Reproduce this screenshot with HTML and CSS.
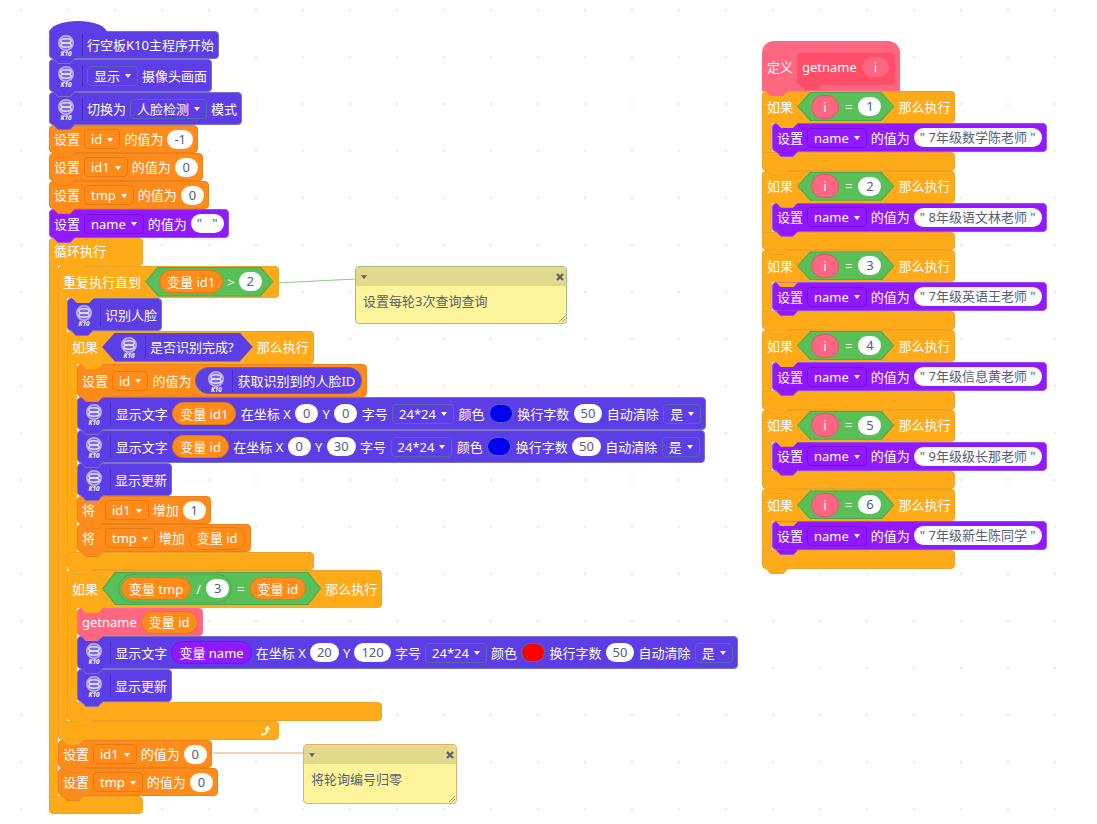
FILE: index.html
```html
<!DOCTYPE html>
<html lang="zh">
<head>
<meta charset="utf-8">
<title>行空板K10 积木程序</title>
<link rel="stylesheet" href="styles.css">
</head>
<body>
<svg class="defs" width="0" height="0" aria-hidden="true">
  <symbol id="k10" viewBox="0 0 24 24">
    <circle cx="12" cy="10" r="7.2" fill="#7c66ea" stroke="#bdb4f6" stroke-width="1.6"/>
    <ellipse cx="12" cy="7.9" rx="5.2" ry="2.2" fill="none" stroke="#e3dffc" stroke-width="1.5"/>
    <ellipse cx="12" cy="12.1" rx="5.2" ry="2.2" fill="none" stroke="#e3dffc" stroke-width="1.5"/>
  </symbol>
  <symbol id="dn" viewBox="0 0 8 5"><path d="M0 0h8L4 5z" fill="#575e75"/></symbol>
  <symbol id="cl" viewBox="0 0 8 8"><path d="M1 1l6 6M7 1L1 7" stroke="#575e75" stroke-width="2.2" fill="none"/></symbol>
  <symbol id="rs" viewBox="0 0 8 8"><path d="M1 7L7 1M4 7l3-3" stroke="#9a9a7c" stroke-width="1" fill="none"/></symbol>
</svg>

<main class="canvas">
  <svg class="links" width="1097" height="824" aria-hidden="true">
    <line x1="277" y1="283" x2="356" y2="279" class="link-green"/>
    <line x1="213" y1="753" x2="304" y2="753" class="link-orange"/>
  </svg>

  <section class="script script-main">
    <div class="b violet hat"><span class="ic"><svg><use href="#k10"/></svg><b class="k">K10</b></span><i class="sep"></i><span>行空板K10主程序开始</span></div>
    <div class="b violet h33"><span class="ic"><svg><use href="#k10"/></svg><b class="k">K10</b></span><i class="sep"></i><span class="dd">显示</span><span>摄像头画面</span></div>
    <div class="b violet h33"><span class="ic"><svg><use href="#k10"/></svg><b class="k">K10</b></span><i class="sep"></i><span>切换为</span><span class="dd">人脸检测</span><span>模式</span></div>
    <div class="b orange"><span>设置</span><span class="dd">id</span><span>的值为</span><span class="num">-1</span></div>
    <div class="b orange"><span>设置</span><span class="dd">id1</span><span>的值为</span><span class="num">0</span></div>
    <div class="b orange"><span>设置</span><span class="dd">tmp</span><span>的值为</span><span class="num">0</span></div>
    <div class="b purple h29"><span>设置</span><span class="dd">name</span><span>的值为</span><span class="num str">"&nbsp;&nbsp;&nbsp;"</span></div>

    <div class="c amber forever">
      <div class="c-head"><span>循环执行</span></div>
      <div class="c-mouth arm9">

        <div class="c amber">
          <div class="c-head h32"><span>重复执行直到</span>
            <div class="bool green"><span class="pill orange">变量 id1</span><span>&gt;</span><span class="num">2</span></div>
          </div>
          <div class="c-mouth arm9">
            <div class="b violet h33"><span class="ic"><svg><use href="#k10"/></svg><b class="k">K10</b></span><i class="sep"></i><span>识别人脸</span></div>

            <div class="c amber">
              <div class="c-head h33"><span>如果</span>
                <div class="bool violet bool-ic"><span class="ic"><svg><use href="#k10"/></svg><b class="k">K10</b></span><i class="sep"></i><span>是否识别完成?</span></div>
                <span>那么执行</span>
              </div>
              <div class="c-mouth">
                <div class="b orange h33"><span>设置</span><span class="dd">id</span><span>的值为</span>
                  <div class="pill violet pill-ic"><span class="ic"><svg><use href="#k10"/></svg><b class="k">K10</b></span><i class="sep"></i><span>获取识别到的人脸ID</span></div>
                </div>
                <div class="b violet h33 row-wide"><span class="ic"><svg><use href="#k10"/></svg><b class="k">K10</b></span><i class="sep"></i><span>显示文字</span><span class="pill orange">变量 id1</span><span>在坐标 X</span><span class="num">0</span><span>Y</span><span class="num">0</span><span>字号</span><span class="dd">24*24</span><span>颜色</span><i class="swatch blue"></i><span>换行字数</span><span class="num">50</span><span>自动清除</span><span class="dd">是</span></div>
                <div class="b violet h33 row-wide"><span class="ic"><svg><use href="#k10"/></svg><b class="k">K10</b></span><i class="sep"></i><span>显示文字</span><span class="pill orange">变量 id</span><span>在坐标 X</span><span class="num">0</span><span>Y</span><span class="num">30</span><span>字号</span><span class="dd">24*24</span><span>颜色</span><i class="swatch blue"></i><span>换行字数</span><span class="num">50</span><span>自动清除</span><span class="dd">是</span></div>
                <div class="b violet h33"><span class="ic"><svg><use href="#k10"/></svg><b class="k">K10</b></span><i class="sep"></i><span>显示更新</span></div>
                <div class="b orange"><span class="w-jiang">将</span><span class="dd">id1</span><span>增加</span><span class="num">1</span></div>
                <div class="b orange"><span class="w-jiang">将</span><span class="dd">tmp</span><span>增加</span><span class="pill orange">变量 id</span></div>
              </div>
              <div class="c-foot"></div>
            </div>

            <div class="c amber">
              <div class="c-head h38"><span>如果</span>
                <div class="bool green bool-wide">
                  <div class="pill green pill-math"><span class="pill orange">变量 tmp</span><span>/</span><span class="num">3</span></div>
                  <span>=</span><span class="pill orange">变量 id</span>
                </div>
                <span>那么执行</span>
              </div>
              <div class="c-mouth">
                <div class="b pink"><span>getname</span><span class="pill orange">变量 id</span></div>
                <div class="b violet h33 row-mid"><span class="ic"><svg><use href="#k10"/></svg><b class="k">K10</b></span><i class="sep"></i><span>显示文字</span><span class="pill purple">变量 name</span><span>在坐标 X</span><span class="num">20</span><span>Y</span><span class="num">120</span><span>字号</span><span class="dd">24*24</span><span>颜色</span><i class="swatch red"></i><span>换行字数</span><span class="num">50</span><span>自动清除</span><span class="dd">是</span></div>
                <div class="b violet h33"><span class="ic"><svg><use href="#k10"/></svg><b class="k">K10</b></span><i class="sep"></i><span>显示更新</span></div>
              </div>
              <div class="c-foot h19"></div>
            </div>
          </div>
          <div class="c-foot h19 loop-foot">
            <svg class="loop" width="11" height="11" viewBox="0 0 11 11"><path d="M1 9.5C5 10 7.5 8 7.5 3.5" fill="none" stroke="#fff" stroke-width="2"/><path d="M4.5 4.5L7.5 0.5l3 4z" fill="#fff"/></svg>
          </div>
        </div>

        <div class="b orange"><span>设置</span><span class="dd">id1</span><span>的值为</span><span class="num">0</span></div>
        <div class="b orange"><span>设置</span><span class="dd">tmp</span><span>的值为</span><span class="num">0</span></div>
      </div>
      <div class="c-foot no-tab"></div>
    </div>
  </section>

  <section class="script script-def">
    <div class="define pink">
      <span>定义</span>
      <div class="proto"><span>getname</span><span class="pill arg">i</span></div>
    </div>

    <div class="c amber case">
      <div class="c-head h32"><span>如果</span><div class="bool green bool-case"><span class="pill arg-round">i</span><span>=</span><span class="num">1</span></div><span>那么执行</span></div>
      <div class="c-mouth"><div class="b purple h29"><span>设置</span><span class="dd">name</span><span>的值为</span><span class="num str">"&nbsp;7年级数学陈老师&nbsp;"</span></div></div>
      <div class="c-foot case-foot"></div>
    </div>
    <div class="c amber case">
      <div class="c-head h32"><span>如果</span><div class="bool green bool-case"><span class="pill arg-round">i</span><span>=</span><span class="num">2</span></div><span>那么执行</span></div>
      <div class="c-mouth"><div class="b purple h29"><span>设置</span><span class="dd">name</span><span>的值为</span><span class="num str">"&nbsp;8年级语文林老师&nbsp;"</span></div></div>
      <div class="c-foot case-foot"></div>
    </div>
    <div class="c amber case">
      <div class="c-head h32"><span>如果</span><div class="bool green bool-case"><span class="pill arg-round">i</span><span>=</span><span class="num">3</span></div><span>那么执行</span></div>
      <div class="c-mouth"><div class="b purple h29"><span>设置</span><span class="dd">name</span><span>的值为</span><span class="num str">"&nbsp;7年级英语王老师&nbsp;"</span></div></div>
      <div class="c-foot case-foot"></div>
    </div>
    <div class="c amber case">
      <div class="c-head h32"><span>如果</span><div class="bool green bool-case"><span class="pill arg-round">i</span><span>=</span><span class="num">4</span></div><span>那么执行</span></div>
      <div class="c-mouth"><div class="b purple h29"><span>设置</span><span class="dd">name</span><span>的值为</span><span class="num str">"&nbsp;7年级信息黄老师&nbsp;"</span></div></div>
      <div class="c-foot case-foot"></div>
    </div>
    <div class="c amber case">
      <div class="c-head h32"><span>如果</span><div class="bool green bool-case"><span class="pill arg-round">i</span><span>=</span><span class="num">5</span></div><span>那么执行</span></div>
      <div class="c-mouth"><div class="b purple h29"><span>设置</span><span class="dd">name</span><span>的值为</span><span class="num str">"&nbsp;9年级级长那老师&nbsp;"</span></div></div>
      <div class="c-foot case-foot"></div>
    </div>
    <div class="c amber case">
      <div class="c-head h32"><span>如果</span><div class="bool green bool-case"><span class="pill arg-round">i</span><span>=</span><span class="num">6</span></div><span>那么执行</span></div>
      <div class="c-mouth"><div class="b purple h29"><span>设置</span><span class="dd">name</span><span>的值为</span><span class="num str">"&nbsp;7年级新生陈同学&nbsp;"</span></div></div>
      <div class="c-foot case-foot"></div>
    </div>
  </section>

  <aside class="note note-a">
    <div class="note-head"><svg class="n-dn"><use href="#dn"/></svg><svg class="n-cl"><use href="#cl"/></svg></div>
    <div class="note-body">设置每轮3次查询查询</div>
    <svg class="n-rs"><use href="#rs"/></svg>
  </aside>
  <aside class="note note-b">
    <div class="note-head"><svg class="n-dn"><use href="#dn"/></svg><svg class="n-cl"><use href="#cl"/></svg></div>
    <div class="note-body">将轮询编号归零</div>
    <svg class="n-rs"><use href="#rs"/></svg>
  </aside>
</main>
</body>
</html>
```
FILE: styles.css
```css
* { box-sizing: border-box; }
html, body { margin: 0; padding: 0; background: #fff; }
body {
  font-family: "Noto Sans", "Noto Sans CJK SC", sans-serif;
  font-size: 13px;
  line-height: 18px;
  color: #fff;
}
.defs { position: absolute; }

.canvas {
  position: relative;
  width: 1097px;
  height: 824px;
  overflow: hidden;
  background-color: #fff;
  background-image: radial-gradient(circle at center, #e8e8e8 0, #e8e8e8 1px, transparent 1.3px);
  background-size: 47px 47px;
  background-position: -2.5px -13.5px;
}
.links { position: absolute; left: 0; top: 0; }
.link-green { stroke: #8fc58a; stroke-width: 1; }
.link-orange { stroke: #e5a566; stroke-width: 1; }

.script {
  position: absolute;
  display: flex;
  flex-direction: column;
  align-items: flex-start;
}
.script-main { left: 49px; top: 31px; }
.script-def { left: 762px; top: 41px; }

/* palette */
.violet { --f: #5c3de6; --e: #7774bd; --d: #5568ac; }
.orange { --f: #ff8c1a; --e: #ea8120; --d: #e67a10; }
.amber  { --f: #ffab19; --e: #eaa32a; --d: #e09510; }
.purple { --f: #9119ff; --e: #9a50e0; --d: #7a10dd; }
.pink   { --f: #ff6680; --e: #f5708a; --d: #e04a66; }
.green  { --f: #59c059; --e: #4fa84f; --d: #4fa84f; }

/* stack blocks */
.b, .c-head, .c-foot {
  position: relative;
  display: flex;
  align-items: center;
  gap: 4px;
  height: 28px;
  padding: 0 4px;
  white-space: nowrap;
  background: var(--f);
  border: 1px solid var(--e);
  border-radius: 4px;
}
.b { width: max-content; }
.h29 { height: 29px; }
.h32 { height: 32px; }
.h33 { height: 33px; }
.h38 { height: 38px; }
.row-wide { gap: 4.4px; }
.row-mid { gap: 4.15px; }
.w-jiang { width: 19px; }

.b::after, .c-foot::after, .c-head::after, .define::after, .proto::after {
  content: "";
  position: absolute;
  z-index: 2;
  top: 100%;
  left: 3px;
  width: 22px;
  height: 5px;
  background: var(--f);
  clip-path: polygon(0 0, 100% 0, calc(100% - 5px) 100%, 5px 100%);
}
.b::before, .c-foot::before {
  content: "";
  position: absolute;
  z-index: 2;
  top: calc(100% + 1px);
  left: 3px;
  width: 22px;
  height: 5px;
  background: var(--e);
  clip-path: polygon(0 0, 100% 0, calc(100% - 5px) 100%, 5px 100%);
}
.no-tab::before, .no-tab::after { display: none; }
.hat { border-top-left-radius: 0; }
.hat > .ic, .hat > span, .hat > .sep { position: relative; z-index: 1; }
.hat .ic::before {
  content: "";
  position: absolute;
  left: -5px;
  top: -12px;
  width: 58px;
  height: 12px;
  background: var(--f);
  border-radius: 50% 50% 0 0 / 100% 100% 0 0;
}

/* C-shaped blocks */
.c {
  display: inline-flex;
  flex-direction: column;
  position: relative;
}
.forever { min-width: 94px; }
.forever > .c-head { padding-bottom: 4px; }
.c-head {
  padding-bottom: 2px;
  border-bottom: 0;
  border-bottom-left-radius: 0;
  border-bottom-right-radius: 4px;
}
.c-head::after { left: 13px; }
.c-mouth {
  display: flex;
  flex-direction: column;
  align-items: flex-start;
  width: 0;
  padding-left: 9px;
  background: var(--f);
  border-left: 1px solid var(--e);
  box-sizing: content-box;
}
.arm9 { padding-left: 8px; }
.c-foot { height: 18px; border-top-left-radius: 0; }
.h19 { height: 19px; }
.case-foot { height: 18.7px; }
.loop-foot { justify-content: flex-end; }
.loop { margin-right: 3px; margin-bottom: 1px; }

/* fields */
.ic {
  position: relative;
  flex: none;
  width: 24px;
  height: 24px;
  display: flex;
  justify-content: center;
}
.ic svg { width: 24px; height: 24px; }
.k {
  position: absolute;
  left: 0;
  right: 0;
  bottom: 0;
  text-align: center;
  font-size: 6.4px;
  font-style: italic;
  font-weight: 700;
  line-height: 7px;
  color: #fff;
}
.sep {
  flex: none;
  width: 1px;
  height: 22px;
  background: #4530c4;
}
.dd {
  display: inline-flex;
  align-items: center;
  gap: 5px;
  height: 20px;
  padding: 0 6px;
  border: 1px solid var(--d);
  border-radius: 4px;
}
.dd::after {
  content: "";
  width: 0;
  height: 0;
  border-left: 3.5px solid transparent;
  border-right: 3.5px solid transparent;
  border-top: 4px solid #fff;
  margin-top: 1px;
}
.num {
  display: inline-block;
  flex: none;
  min-width: 23px;
  height: 19px;
  padding: 0 7px;
  border-radius: 10px;
  background: #fff;
  color: #575e75;
  text-align: center;
  line-height: 19px;
}
.str { padding: 0 6px; }
.swatch {
  flex: none;
  width: 24px;
  height: 19px;
  border-radius: 10px;
  border: 1px solid var(--d);
}
.blue { background: #0000ee; }
.red { background: #ff0000; }

.pill {
  display: inline-flex;
  align-items: center;
  flex: none;
  gap: 4px;
  height: 23px;
  padding: 0 7px;
  border-radius: 12px;
  background: var(--f);
  border: 1px solid var(--d);
}
.pill-ic { height: 27px; border-radius: 14px; padding: 0 6px 0 8px; }
.pill-math { height: 29px; border-radius: 15px; padding: 0 2px; gap: 5px; }

/* boolean hexagons */
.bool {
  position: relative;
  isolation: isolate;
  display: inline-flex;
  align-items: center;
  flex: none;
  gap: 4px;
  height: 30px;
  padding: 0 12px 0 14px;
  background: var(--e);
  clip-path: polygon(0 50%, 13px 0, calc(100% - 13px) 0, 100% 50%, calc(100% - 13px) 100%, 13px 100%);
}
.bool::before {
  content: "";
  position: absolute;
  z-index: -1;
  inset: 1px;
  background: var(--f);
  clip-path: polygon(0 50%, 13px 0, calc(100% - 13px) 0, 100% 50%, calc(100% - 13px) 100%, 13px 100%);
}
.bool-ic { height: 29px; padding: 0 19px 0 15px; background: var(--f); }
.bool-wide { height: 33px; padding: 0 15px 0 16px; gap: 5px; }
.bool-case { height: 29px; padding: 0 13px 0 14px; gap: 6px; }

.arg-round {
  height: 24px;
  width: 28px;
  justify-content: center;
  padding: 0;
  --f: #ff6680;
  --d: #e25570;
}

/* define hat */
.define {
  position: relative;
  display: flex;
  align-items: flex-start;
  gap: 4px;
  width: 138px;
  height: 50px;
  padding: 12px 5px 0;
  background: var(--f);
  border-radius: 12px 12px 0 0;
  white-space: nowrap;
}
.define > span { line-height: 28px; }
.define::after { left: 4px; }
.proto {
  position: relative;
  display: flex;
  align-items: center;
  gap: 5px;
  height: 32px;
  width: 98px;
  padding: 0 6px 4px 5px;
  background: #ff4d6a;
  border-radius: 4px;
  --f: #ff4d6a;
}
.proto::after { z-index: 3; }
.arg {
  height: 20px;
  width: 27px;
  justify-content: center;
  padding: 0;
  background: #ff6680;
  border-color: #ff6680;
}

/* free-canvas comments */
.note {
  position: absolute;
  display: flex;
  flex-direction: column;
  border-radius: 4px;
  overflow: hidden;
  background: #fef49c;
  color: #575e75;
  border: 1px solid #9dc08a;
}
.note-a { left: 355px; top: 266px; width: 212px; height: 58px; }
.note-b { left: 303px; top: 744px; width: 154px; height: 60px; border-color: #e8ad6b; }
.note-head {
  position: relative;
  flex: none;
  height: 19px;
  background: #e2d98c;
}
.note-body { padding: 6px 7px 0; }
.n-dn { position: absolute; left: 5px; top: 8px; width: 6px; height: 4px; }
.n-cl { position: absolute; right: 2px; top: 6px; width: 8px; height: 8px; }
.n-rs { position: absolute; right: 0; bottom: 0; width: 8px; height: 8px; }
```
